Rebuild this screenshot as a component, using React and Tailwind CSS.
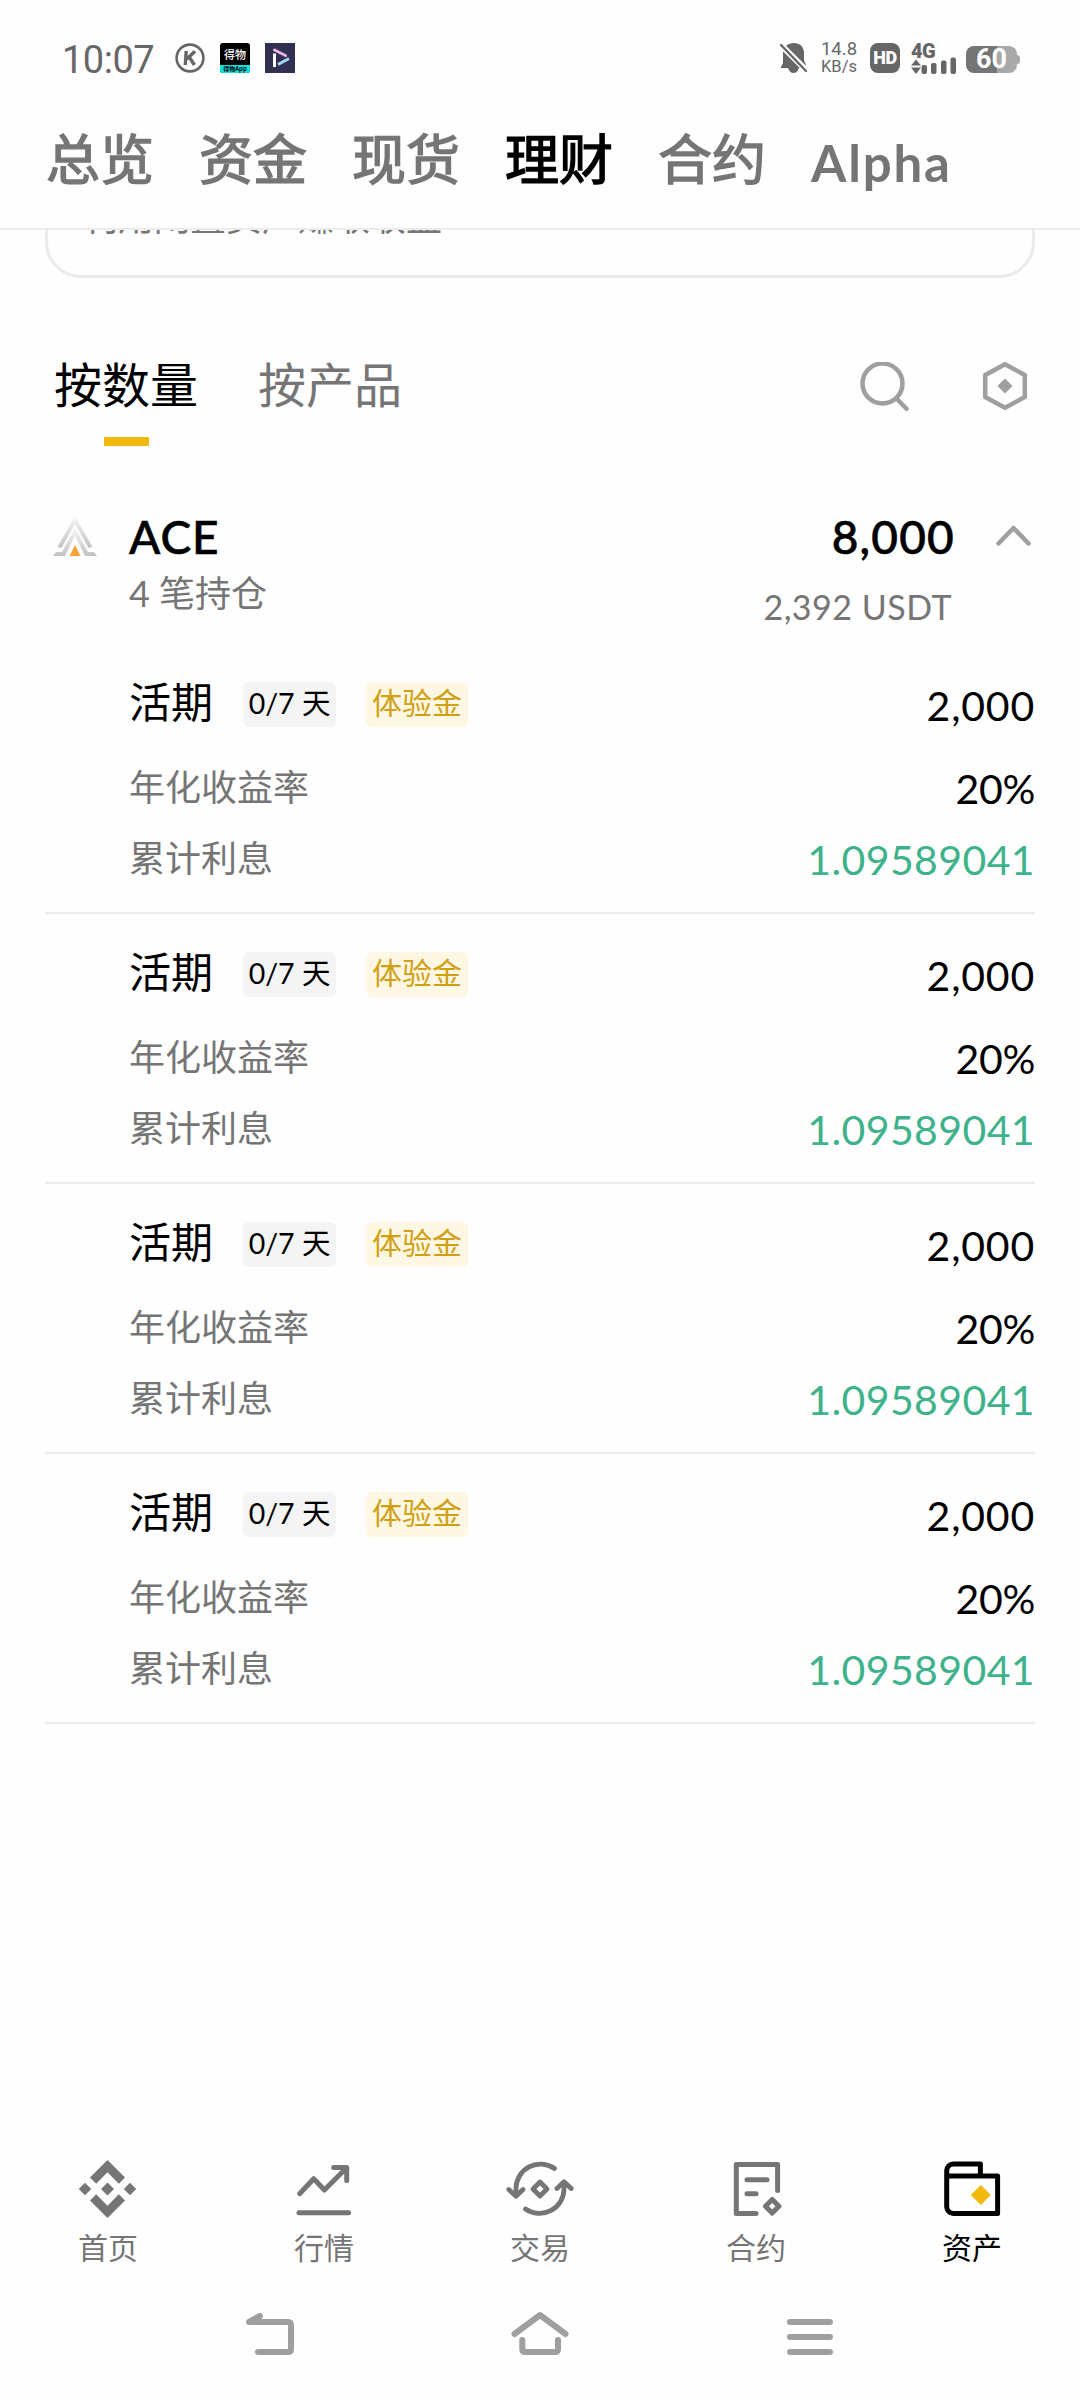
import React from 'react';

const GREY = '#757575';
const SYS = '#9f9f9f';

const topTabs = ['总览', '资金', '现货', '理财', '合约'];

const positions = [
  { id: 1, amount: '2,000', apr: '20%', interest: '1.09589041' },
  { id: 2, amount: '2,000', apr: '20%', interest: '1.09589041' },
  { id: 3, amount: '2,000', apr: '20%', interest: '1.09589041' },
  { id: 4, amount: '2,000', apr: '20%', interest: '1.09589041' },
];

/* ---------- status bar ---------- */

function StatusBar() {
  return (
    <div className="flex h-[116px] items-center justify-between pl-[62px] pr-[60px] text-[#666]">
      <div className="flex items-center">
        <span className="w-[113px] font-['Roboto',sans-serif] text-[38px] leading-[40px] tracking-[-0.5px] pt-1">10:07</span>

        <svg width="30" height="30" viewBox="0 0 30 30" fill="none" stroke="#666">
          <circle cx="15" cy="15" r="13.400" strokeWidth="2.600" />
          <path d="M11.200 8l-.9 14M20 8.200l-8.200 7.800M14.200 14l5.200 8" strokeWidth="3.400" />
        </svg>

        <div className="ml-[15px] flex h-[30px] w-[30px] flex-col overflow-hidden rounded-[3px] bg-black text-center font-['Noto_Sans_CJK_SC',sans-serif]">
          <span className="h-[22px] text-[11px] leading-[23px] font-medium text-white">得物</span>
          <span className="h-2 bg-[#0fe3e0] text-[6px] leading-[8px] font-bold text-black">得物App</span>
        </div>

        <svg className="ml-[15px]" width="30" height="30" viewBox="0 0 30 30" fill="none" strokeWidth="3">
          <rect width="30" height="30" fill="#312f52" />
          <path d="M9.500 7l11 5.500" stroke="#e3b5e0" strokeLinecap="round" />
          <path d="M13 21.500l11-6" stroke="#a3d8f5" />
          <path d="M9.500 10.500V24" stroke="#fff" />
        </svg>
      </div>

      <div className="flex items-center">
        <svg width="28" height="30" viewBox="0 0 28 30" fill="#666">
          <path d="M14 0C20 0 24 4 24 10v7l2 5v3H1v-1l2-4V10C3 4 8 0 14 0zM8 25h11c-1 3-3 5-5.500 5S9 28 8 25z" />
          <path d="M-1 0L27 28" stroke="#fff" strokeWidth="6" />
          <path d="M1 2l25 26" stroke="#666" strokeWidth="2.400" strokeLinecap="round" />
        </svg>

        <div className="ml-3 flex w-[38px] flex-col text-center font-['Roboto',sans-serif]">
          <span className="text-[18.500px] leading-[15px]">14.8</span>
          <span className="mt-[2px] text-[16.500px] leading-[15px]">KB/s</span>
        </div>

        <div className="ml-[12px] flex h-[30px] w-[30px] items-center justify-center rounded-lg bg-[#666] font-['Roboto',sans-serif] text-[18px] leading-none font-black tracking-[-0.5px] text-white">HD</div>

        <div className="ml-[11px] flex h-[31px] w-[46px] flex-col">
          <span className="font-['Roboto',sans-serif] text-[20px] leading-[16px] font-black tracking-[-0.5px]">4G</span>
          <svg width="46" height="32" viewBox="0 0 46 32" fill="#666" className="-mt-4 flex-none">
            <path d="M0 22.500l5-6 5 6zM0 24.500h10l-5 6.500z" />
            <rect x="10.500" y="22" width="5.500" height="9" rx="2" />
            <rect x="20" y="20" width="5.500" height="11" rx="2" />
            <rect x="30" y="17.500" width="5.500" height="13.500" rx="2" />
            <rect x="39.500" y="14.500" width="5.500" height="16.500" rx="2" />
          </svg>
        </div>

        <div className="ml-[9px] mt-[3px] flex items-center">
          <div className="flex h-[27px] w-[51px] items-center justify-center rounded-[8px] bg-linear-to-r from-[#757575] from-60% to-[#a9a9a9] to-60% font-['Roboto',sans-serif] text-[27px] leading-none font-bold text-white">60</div>
          <div className="h-[9px] w-[3px] rounded-r-sm bg-[#a9a9a9]" />
        </div>
      </div>
    </div>
  );
}

/* ---------- header ---------- */

function Header() {
  return (
    <header className="h-[230px] flex-none border-b-2 border-[#ebebeb]">
      <StatusBar />
      <nav className="flex h-20 items-center gap-[45px] pl-[46px] text-[54px] leading-[54px] text-[#757575]">
        {topTabs.map((tab) => (
          <span key={tab} className={`pt-0.5 [-webkit-text-stroke:1.4px_currentColor] ${tab === '理财' ? 'text-black' : ''}`}>{tab}</span>
        ))}
        <span className="pt-3.5 font-['Lato',sans-serif] text-[51px] font-bold tracking-[1.8px]">Alpha</span>
      </nav>
    </header>
  );
}

/* ---------- list ---------- */

function ListTabs() {
  return (
    <div className="flex justify-between pt-20 pr-[51px] pl-[54px]">
      <div className="flex gap-[60px] text-[48px] leading-[48px]">
        <div className="flex flex-col items-center">
          <span>按数量</span>
          <span className="mt-[31px] h-[9px] w-[45px] rounded-[1px] bg-[#f0b90b]" />
        </div>
        <span className="text-[#757575]">按产品</span>
      </div>

      <div className="mt-1 flex gap-[72px]">
        <svg width="50" height="50" viewBox="0 0 50 50" fill="none" stroke={SYS} strokeWidth="4.500" strokeLinecap="round">
          <circle cx="23.500" cy="21.500" r="20" />
          <path d="M38 37l9.500 9.800" />
        </svg>
        <svg width="48" height="48" viewBox="0 0 48 48" fill="none" stroke={SYS} strokeWidth="4.500" strokeLinejoin="round">
          <path d="M24 2.200L43.800 13v22L24 45.800 4.200 35V13z" />
          <path d="M24 16.500l7.500 7.500-7.500 7.500-7.500-7.500z" fill={SYS} stroke="none" />
        </svg>
      </div>
    </div>
  );
}

function AceLogo() {
  return (
    <svg width="44" height="44" viewBox="0 0 44 44">
      <defs>
        <linearGradient id="aceFade" x1="0" y1="0" x2="0" y2="1">
          <stop offset="0" stopColor="#f8f8f8" />
          <stop offset="1" stopColor="#c2c2c2" />
        </linearGradient>
      </defs>
      <path fill="url(#aceFade)" d="M22 2l17.500 31-4 1L22 10 8.500 34l-4-1z" />
      <path fill="url(#aceFade)" d="M22 14l13 24h6l3 4H32L22 22 12 42H0l3-4h6z" />
      <path fill="#f7a33c" d="M22 31l5.500 11h-11z" />
    </svg>
  );
}

function AssetSummary() {
  return (
    <div className="flex pt-16 pr-[48px] pl-[53px] font-['Lato','Noto_Sans_CJK_SC',sans-serif]">
      <div className="pt-1">
        <AceLogo />
      </div>
      <div className="ml-8 flex flex-col">
        <span className="pt-px text-[46px] leading-[52px] font-medium tracking-[1px] [-webkit-text-stroke:0.6px_currentColor]">ACE</span>
        <span className="mt-3 text-[36px] leading-[36px] text-[#757575]">4 笔持仓</span>
      </div>
      <div className="ml-auto flex flex-col items-end">
        <span className="pt-px text-[46px] leading-[52px] font-medium tracking-[1.2px] [-webkit-text-stroke:0.6px_currentColor]">8,000</span>
        <span className="mt-6 mr-[3px] text-[34px] leading-[40px] tracking-[0.5px] text-[#757575]">2,392 USDT</span>
      </div>
      <svg className="mt-[13px] ml-[39px]" width="38" height="24" viewBox="0 0 38 24" fill="none" stroke={SYS} strokeWidth="4.500" strokeLinecap="round" strokeLinejoin="round">
        <path d="M4.500 20.500L19.500 5l15 15.500" />
      </svg>
    </div>
  );
}

function Row({ label, children }) {
  return (
    <div className="flex h-12 items-center justify-between">
      <span className="pb-1 text-[36px] leading-[36px] text-[#757575]">{label}</span>
      {children}
    </div>
  );
}

function Position({ item }) {
  return (
    <div className="h-[270px] border-b-2 border-[#ebebeb] pt-9 pl-[84px]">
      <div className="flex h-12 items-center">
        <span className="pb-2 text-[42px] leading-[42px]">活期</span>
        <span className="ml-[30px] flex h-[45px] w-[93px] items-center justify-center rounded-md bg-[#f4f4f4] pb-0.5 font-['Lato','Noto_Sans_CJK_SC',sans-serif] text-[28.500px] leading-[29px] whitespace-nowrap">0/7 天</span>
        <span className="ml-[30px] flex h-[45px] w-[102px] items-center justify-center rounded-md bg-[#fdf7e3] pb-1.5 text-[30px] leading-[30px] text-[#d0a012]">体验金</span>
        <span className="ml-auto pt-[3px] font-['Lato',sans-serif] text-[41px] leading-[45px] tracking-[0.8px]">{item.amount}</span>
      </div>
      <div className="mt-[35px] flex flex-col gap-[23px]">
        <Row label="年化收益率">
          <span className="pt-[3px] font-['Lato',sans-serif] text-[41px] leading-[45px] tracking-[-0.3px]">{item.apr}</span>
        </Row>
        <Row label="累计利息">
          <span className="pt-[3px] font-['Lato',sans-serif] text-[41px] leading-[45px] tracking-[0.4px] text-[#3eb38b]">{item.interest}</span>
        </Row>
      </div>
    </div>
  );
}

/* ---------- bottom navigation ---------- */

const navItems = [
  {
    label: '首页',
    icon: (
      <svg width="60" height="60" viewBox="0 0 60 60" fill={GREY}>
        <path d="M29.500 1L47 18.500l-6.200 6.200-11.300-11.400-11.300 11.400L12 18.500zM29.500 59L47 41.500l-6.200-6.200-11.300 11.400-11.300-11.400L12 41.500z" />
        <path d="M7 23.800l6.200 6.200L7 36.200.8 30zM29.500 23.500L36 30l-6.500 6.500L23 30zM52 23.800l6.200 6.200-6.200 6.200-6.200-6.200z" />
      </svg>
    ),
  },
  {
    label: '行情',
    icon: (
      <svg width="60" height="60" viewBox="0 0 60 60" fill="none" stroke={GREY} strokeWidth="5" strokeLinecap="round" strokeLinejoin="round">
        <path d="M5.600 34.700l14.100-15L30.400 31l22-22M39.700 8.400h13v13M5 53.700h49.500" />
      </svg>
    ),
  },
  {
    label: '交易',
    icon: (
      <svg width="68" height="60" viewBox="0 0 68 60" fill="none" stroke={GREY} strokeWidth="4.800" strokeLinecap="round" strokeLinejoin="round">
        <path d="M10 36v-6A24.500 24.500 0 0 1 48.500 9.500M2.800 30.500L10 37.300l7-6.800" />
        <path d="M58 24v6a24.500 24.500 0 0 1-38.500 20M51 29.500l7-6.800 7.200 6.800" />
        <path d="M34 23l7 7-7 7-7-7z" />
      </svg>
    ),
  },
  {
    label: '合约',
    icon: (
      <svg width="60" height="60" viewBox="0 0 60 60" fill="none" stroke={GREY} strokeWidth="5" strokeLinecap="round" strokeLinejoin="round">
        <path d="M30 54.500H10.300V5.500h41.300v26M21 20.700h20M21 34.700h9" />
        <path d="M46.200 40.500l6.700 6.800-6.700 6.800-6.700-6.800z" />
      </svg>
    ),
  },
  {
    label: '资产',
    active: true,
    icon: (
      <svg width="60" height="60" viewBox="0 0 60 60" fill="none" stroke="#000" strokeWidth="5" strokeLinecap="round" strokeLinejoin="round">
        <path d="M4.700 17h50.900v37.500H11.500a6.800 6.800 0 0 1-6.800-6.800V11.500A6.500 6.500 0 0 1 11.200 5h27.200v12" />
        <path d="M38.800 26l10 10-10 10-10-10z" fill="#f0b90b" stroke="none" />
      </svg>
    ),
  },
];

function BottomNav() {
  return (
    <nav className="grid grid-cols-5">
      {navItems.map((item) => (
        <div key={item.label} className="flex flex-col items-center">
          {item.icon}
          <span className={`mt-3 text-[30px] leading-[30px] ${item.active ? 'text-black' : 'text-[#757575]'}`}>{item.label}</span>
        </div>
      ))}
    </nav>
  );
}

function SystemNav() {
  return (
    <div className="mt-[49px] flex justify-center gap-[210px] pb-[42px]">
      <svg width="60" height="48" viewBox="0 0 60 48" fill="none" stroke={SYS} strokeWidth="6" strokeLinecap="round" strokeLinejoin="round">
        <path d="M20 6L9 12h39q3 0 3 3v24q0 3-3 3H18" />
      </svg>
      <svg width="60" height="48" viewBox="0 0 60 48" fill="none" stroke={SYS} strokeWidth="6" strokeLinecap="round" strokeLinejoin="round">
        <path d="M4.500 24L30 5l25.500 19" />
        <path d="M12.300 30v9q0 3 3 3h29.700q3 0 3-3v-9" />
      </svg>
      <svg width="60" height="48" viewBox="0 0 60 48" fill="none" stroke={SYS} strokeWidth="6" strokeLinecap="round">
        <path d="M10 12h40M10 27h40M10 42h40" />
      </svg>
    </div>
  );
}

export default function App() {
  return (
    <div className="flex h-[2400px] w-[1080px] flex-col overflow-hidden bg-[#fefefe] font-['Noto_Sans_CJK_SC',sans-serif] text-black">
      <Header />

      {/* promo card, scrolled most of the way under the header */}
      <div className="flex h-12 flex-none flex-col justify-end overflow-hidden px-[45px]">
        <div className="flex h-[160px] flex-none flex-col justify-end rounded-[36px] border-3 border-[#ebebeb] pb-[42px] pl-[34px]">
          <span className="text-[36px] leading-[36px] text-[#757575]">利用闲置资产赚取收益</span>
        </div>
      </div>

      <ListTabs />
      <AssetSummary />

      <div className="mx-[45px] mt-[17px]">
        {positions.map((item) => (
          <Position key={item.id} item={item} />
        ))}
      </div>

      <footer className="mt-auto">
        <BottomNav />
        <SystemNav />
      </footer>
    </div>
  );
}
